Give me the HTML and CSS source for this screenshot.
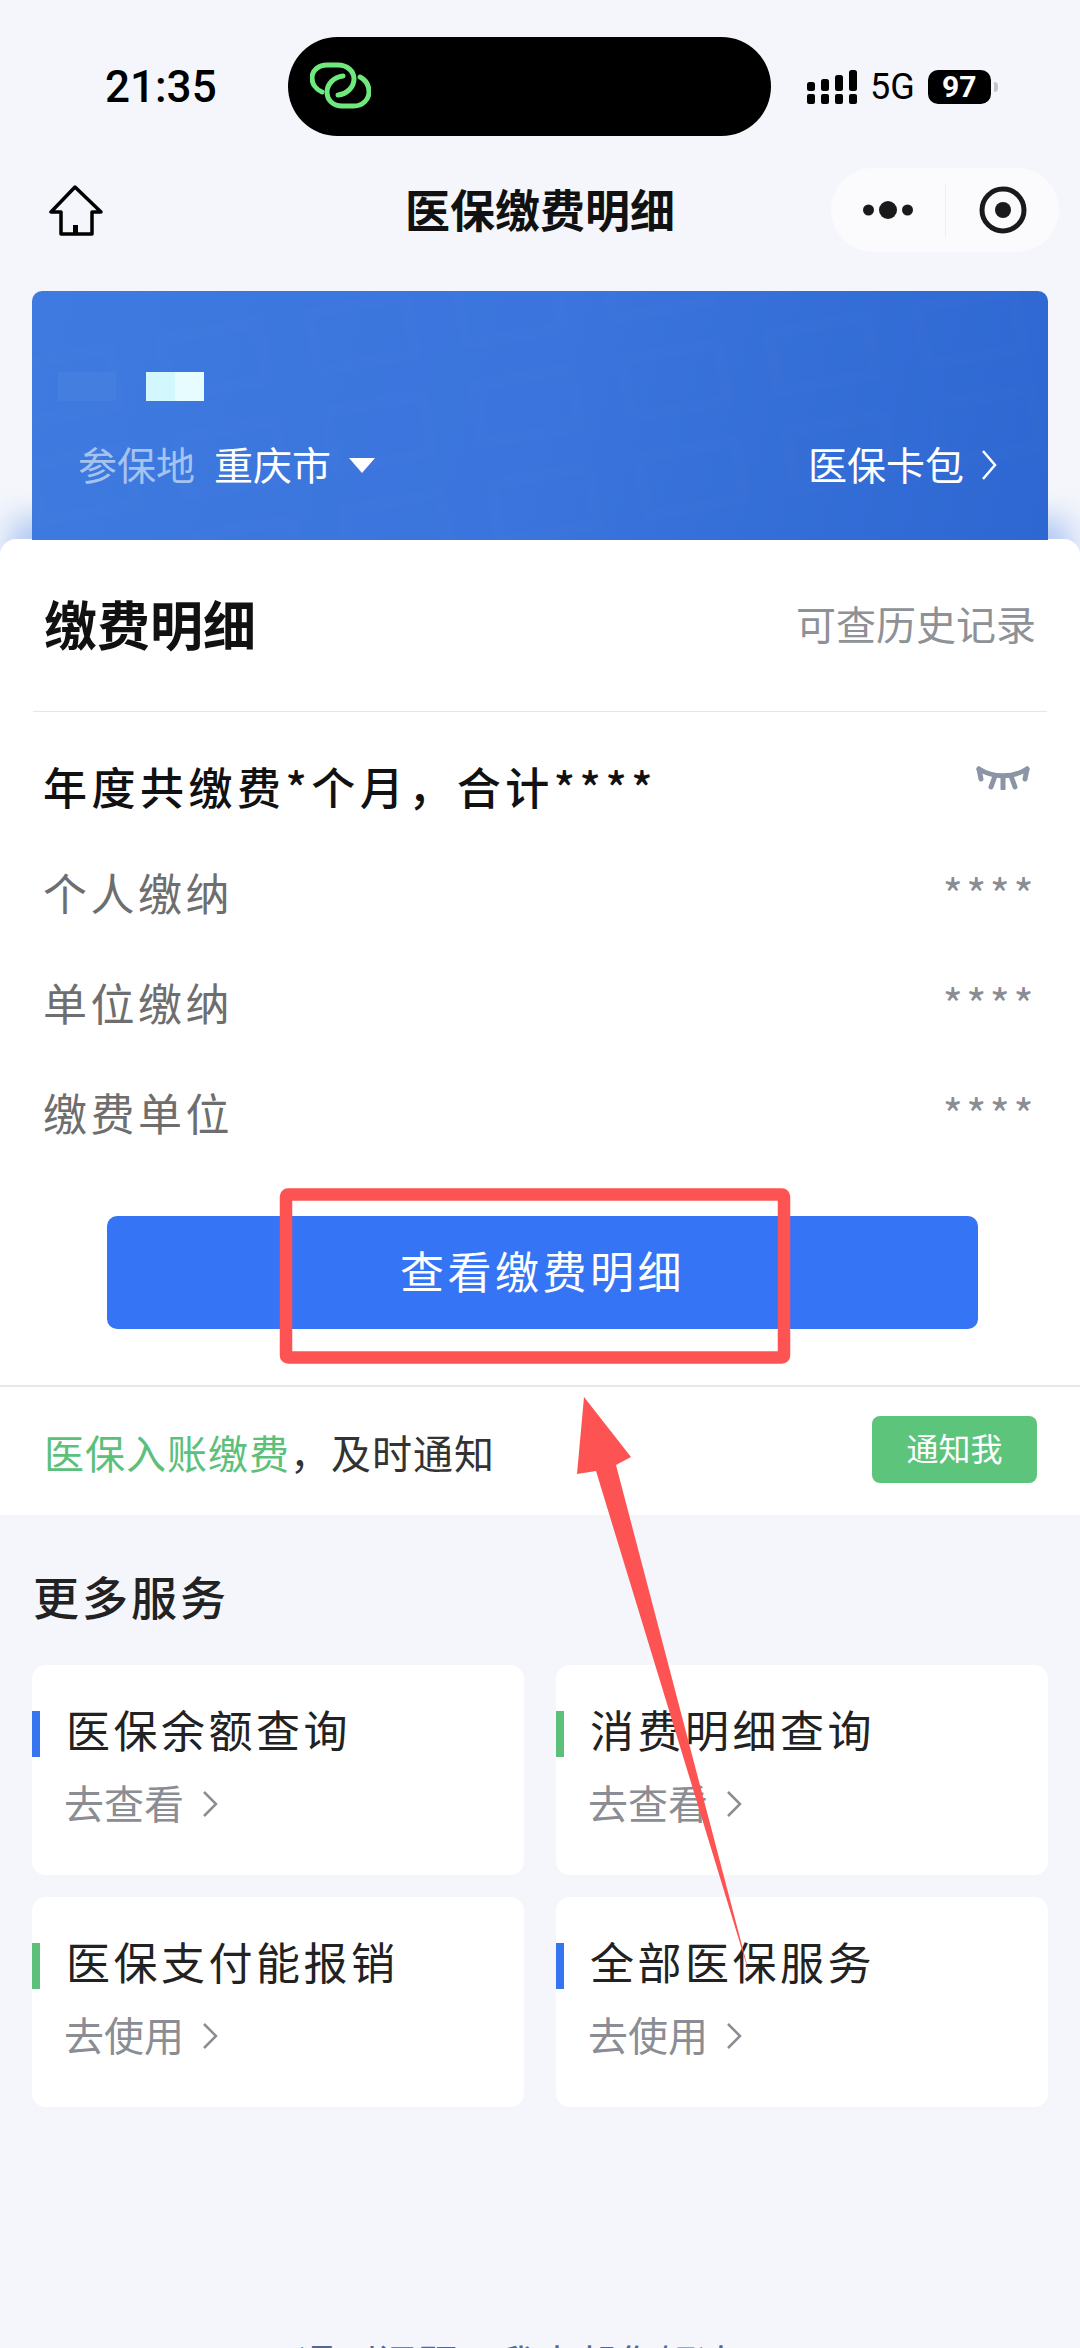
FILE: index.html
```html
<!DOCTYPE html>
<html lang="zh-CN">
<head>
    <meta charset="UTF-8">
    <meta name="viewport" content="width=device-width, initial-scale=1.0">
    <title>医保缴费明细</title>
    <link rel="stylesheet" href="styles.css">
</head>
<body>
<div class="page">
    <div class="status">
        <div class="time">21:35</div>
        <div class="island">
            <svg class="link-icon" width="61" height="47" viewBox="0 0 61 47" fill="none" stroke="#6fe87c" stroke-width="5" stroke-linecap="round">
                <path d="M12 30C5 27 2 21 2 16C2 8 9 3 17 3H28C37 3 44 9 44 17C44 25 37 32 28 33"/>
                <path d="M50 15C56 18 59 24 59 30C59 38 52 44 44 44H32C23 44 17 38 17 30C17 22 24 15 33 14"/>
            </svg>
        </div>
        <div class="status-right">
            <svg width="50" height="34" viewBox="0 0 50 34" fill="#000">
                <rect x="0" y="24" width="8" height="10" rx="2"/><rect x="14" y="24" width="8" height="10" rx="2"/>
                <rect x="28" y="24" width="8" height="10" rx="2"/><rect x="42" y="24" width="8" height="10" rx="2"/>
                <rect x="0" y="12" width="8" height="9" rx="2.5"/><rect x="14" y="9" width="8" height="12" rx="2.5"/>
                <rect x="28" y="5" width="8" height="16" rx="2.5"/><rect x="42" y="0" width="8" height="21" rx="2.5"/>
            </svg>
            <span class="net">5G</span>
            <span class="battery">97</span>
            <span class="battery-nub"></span>
        </div>
    </div>

    <div class="nav">
        <svg class="home" width="54" height="51" viewBox="0 0 54 51" fill="none" stroke="#000" stroke-width="3.5" stroke-linejoin="round">
            <path d="M26 2L2 27H12V49H43V27H52Z"/>
            <rect x="24" y="40" width="5" height="9" fill="#000" stroke="none"/>
        </svg>
        <div class="nav-title">医保缴费明细</div>
        <div class="capsule">
            <div class="capsule-left">
                <svg width="50" height="20" viewBox="0 0 50 20" fill="#1a1a1a">
                    <circle cx="5.5" cy="10" r="5.5"/><circle cx="25" cy="10" r="9"/><circle cx="44.5" cy="10" r="5.5"/>
                </svg>
            </div>
            <div class="capsule-right">
                <svg width="48" height="48" viewBox="0 0 48 48" fill="none">
                    <circle cx="24" cy="24" r="21" stroke="#1a1a1a" stroke-width="5"/>
                    <circle cx="24" cy="24" r="8" fill="#1a1a1a"/>
                </svg>
            </div>
        </div>
    </div>

    <div class="hero">
        <div class="watermark">
            <i></i><i></i><i></i><i></i><i></i><i></i><i></i>
            <i></i><i></i><i></i><i></i><i></i><i></i><i></i>
            <i></i><i></i><i></i><i></i><i></i><i></i><i></i>
        </div>
        <div class="masked-name">
            <span class="mask-a"></span>
            <span class="mask-b"></span>
            <span class="mask-c"></span>
        </div>
        <div class="hero-row">
            <div class="place">
                <span class="place-label">参保地</span>
                <span class="place-name">重庆市</span>
                <span class="caret"></span>
            </div>
            <div class="wallet">
                医保卡包
                <svg width="16" height="30" viewBox="0 0 16 30" fill="none" stroke="#fff" stroke-width="2.5">
                    <path d="M2 1L14 15L2 29"/>
                </svg>
            </div>
        </div>
    </div>

    <div class="sheet">
        <div class="sheet-head">
            <div class="sheet-title">缴费明细</div>
            <div class="sheet-hint">可查历史记录</div>
        </div>
        <div class="total">
            <div class="total-text">年度共缴费*个月，合计****</div>
            <svg class="eye" width="54" height="26" viewBox="0 0 54 26" fill="none" stroke="#8b95a6" stroke-width="5" stroke-linecap="round">
                <path d="M3 5C17 14 37 14 51 5"/>
                <path d="M5 15L3 5M15 23L19 12M27 25V13M39 23L35 12M49 15L51 5"/>
            </svg>
        </div>
        <div class="rows">
            <div class="row"><span>个人缴纳</span><span class="stars">****</span></div>
            <div class="row"><span>单位缴纳</span><span class="stars">****</span></div>
            <div class="row"><span>缴费单位</span><span class="stars">****</span></div>
        </div>
        <div class="main-btn">查看缴费明细</div>
        <div class="notify">
            <div class="notify-text"><span class="green">医保入账缴费</span>，及时通知</div>
            <div class="notify-btn">通知我</div>
        </div>
    </div>

    <div class="more-title">更多服务</div>
    <div class="cards">
        <div class="card">
            <div class="card-head"><span class="bar bar-blue"></span><span class="card-title">医保余额查询</span></div>
            <div class="card-link">去查看
                <svg width="16" height="26" viewBox="0 0 16 26" fill="none" stroke="#8a8d93" stroke-width="2.5"><path d="M2 1L14 13L2 25"/></svg>
            </div>
        </div>
        <div class="card">
            <div class="card-head"><span class="bar bar-green"></span><span class="card-title">消费明细查询</span></div>
            <div class="card-link">去查看
                <svg width="16" height="26" viewBox="0 0 16 26" fill="none" stroke="#8a8d93" stroke-width="2.5"><path d="M2 1L14 13L2 25"/></svg>
            </div>
        </div>
        <div class="card">
            <div class="card-head"><span class="bar bar-green"></span><span class="card-title">医保支付能报销</span></div>
            <div class="card-link">去使用
                <svg width="16" height="26" viewBox="0 0 16 26" fill="none" stroke="#8a8d93" stroke-width="2.5"><path d="M2 1L14 13L2 25"/></svg>
            </div>
        </div>
        <div class="card">
            <div class="card-head"><span class="bar bar-blue"></span><span class="card-title">全部医保服务</span></div>
            <div class="card-link">去使用
                <svg width="16" height="26" viewBox="0 0 16 26" fill="none" stroke="#8a8d93" stroke-width="2.5"><path d="M2 1L14 13L2 25"/></svg>
            </div>
        </div>
    </div>
    <div class="help">遇到问题？我来帮您解决</div>

    <!-- red markup drawn over the screenshot -->
    <svg class="markup" width="1080" height="2348" viewBox="0 0 1080 2348">
        <rect x="286" y="1194.5" width="498" height="163" rx="2" fill="none" stroke="#fd5353" stroke-width="12.5"/>
        <path d="M584 1397L631 1457L616 1465L750 1976L596 1471L577 1474Z" fill="#fd5353"/>
    </svg>
</div>
</body>
</html>
```

FILE: styles.css
```css
* {
    box-sizing: border-box;
}
body {
    margin: 0;
    background-color: #f4f6fb;
    font-family: "Noto Sans CJK SC", "Noto Sans", sans-serif;
}
.page {
    position: relative;
    width: 1080px;
    height: 2348px;
    overflow: hidden;
}

/* status bar */
.status {
    display: flex;
    align-items: center;
    height: 136px;
    padding-top: 37px;
}
.time {
    width: 288px;
    padding-left: 105px;
    font-family: Roboto, sans-serif;
    font-size: 44px;
    font-weight: 500;
    color: #000;
}
.island {
    display: flex;
    align-items: center;
    width: 483px;
    height: 99px;
    padding-left: 22px;
    background-color: #000;
    border-radius: 50px;
}
.link-icon {
    margin-top: -2px;
}
.status-right {
    display: flex;
    align-items: center;
    margin-left: 36px;
}
.net {
    margin-left: 13px;
    font-family: Roboto, sans-serif;
    font-size: 36px;
    color: #000;
}
.battery {
    width: 63px;
    height: 34px;
    margin-left: 13px;
    background-color: #000;
    border-radius: 10px;
    color: #fff;
    font-family: Roboto, sans-serif;
    font-size: 30px;
    font-weight: 700;
    line-height: 34px;
    text-align: center;
}
.battery-nub {
    width: 4px;
    height: 10px;
    margin-left: 3px;
    background-color: #c4c4c8;
    border-radius: 0 4px 4px 0;
}

/* nav */
.nav {
    display: grid;
    grid-template-columns: 1fr auto 1fr;
    align-items: center;
    height: 84px;
    margin-top: 32px;
    padding: 0 21px;
}
.home {
    margin-left: 28px;
}
.nav-title {
    padding-bottom: 3px;
    font-size: 45px;
    font-weight: 700;
    color: #111;
}
.capsule {
    display: flex;
    justify-self: end;
    align-items: center;
    width: 228px;
    height: 84px;
    background-color: #fbfbfd;
    border-radius: 42px;
}
.capsule-left {
    display: flex;
    justify-content: center;
    align-items: center;
    width: 115px;
    height: 54px;
    border-right: 1px solid #eeeef0;
}
.capsule-right {
    display: flex;
    justify-content: center;
    flex: 1;
}

/* blue card */
.hero {
    position: relative;
    z-index: 1;
    height: 249px;
    margin: 39px 32px 0;
    padding-top: 81px;
    background: linear-gradient(105deg, #3e7ae0, #3a74dc 50%, #2e67d1);
    border-radius: 10px 10px 0 0;
    overflow: hidden;
}
.watermark {
    position: absolute;
    top: -20px;
    left: -10px;
    display: grid;
    grid-template-columns: repeat(7, 110px);
    grid-auto-rows: 70px;
    gap: 30px 40px;
    transform: rotate(-10deg);
}
.watermark i {
    border: 12px solid rgba(255, 255, 255, 0.01);
    border-radius: 8px;
}
.masked-name {
    position: relative;
    display: flex;
    height: 29px;
    margin-left: 26px;
}
.mask-a {
    width: 58px;
    margin-right: 30px;
    background-color: #447edf;
}
.mask-b {
    width: 29px;
    background-color: #d2f7fd;
}
.mask-c {
    width: 29px;
    background-color: #e6fcff;
}
.hero-row {
    position: relative;
    display: flex;
    justify-content: space-between;
    align-items: center;
    height: 40px;
    margin-top: 42px;
    padding: 0 51px 0 46px;
    font-size: 39px;
    line-height: 40px;
}
.place {
    display: flex;
    align-items: center;
}
.place-label {
    color: #a6c3f0;
}
.place-name {
    margin-left: 19px;
    color: #fff;
}
.caret {
    width: 0;
    height: 0;
    margin: 4px 0 0 18px;
    border-left: 13px solid transparent;
    border-right: 13px solid transparent;
    border-top: 15px solid #fff;
}
.wallet {
    display: flex;
    align-items: center;
    gap: 17px;
    color: #fff;
}
.wallet svg {
    margin-top: 4px;
}

/* white sheet */
.sheet {
    height: 976px;
    margin-top: -1px;
    background-color: #fff;
    border-radius: 16px 16px 0 0;
    box-shadow: 0 -30px 30px -10px rgba(70, 130, 230, 0.4);
}
.sheet-head {
    display: flex;
    justify-content: space-between;
    align-items: center;
    height: 173px;
    margin: 0 33px;
    padding: 0 11px 5px;
    border-bottom: 1px solid #e6e6e8;
}
.sheet-title {
    font-size: 53px;
    font-weight: 700;
    color: #111;
}
.sheet-hint {
    font-size: 40px;
    color: #8e9196;
}
.total {
    display: flex;
    justify-content: space-between;
    align-items: flex-start;
    height: 60px;
    margin-top: 47px;
    padding: 0 50px 0 43px;
}
.total-text {
    font-size: 44px;
    font-weight: 500;
    line-height: 54px;
    letter-spacing: 4.5px;
    color: #111;
}
.eye {
    margin-top: 5px;
}
.rows {
    margin-top: 20px;
}
.row {
    display: flex;
    justify-content: space-between;
    align-items: center;
    height: 110px;
    padding: 0 43px 5px 43px;
    font-size: 44px;
    letter-spacing: 3.5px;
    color: #6e6e6e;
}
.stars {
    color: #8a8d93;
    font-size: 43px;
    letter-spacing: 3.5px;
}
.main-btn {
    height: 113px;
    margin: 47px 102px 0 107px;
    padding-bottom: 4px;
    background-color: #3575f5;
    border-radius: 10px;
    color: #fff;
    font-size: 44px;
    line-height: 109px;
    letter-spacing: 3.5px;
    text-align: center;
}
.notify {
    display: flex;
    justify-content: space-between;
    align-items: flex-start;
    height: 130px;
    margin-top: 56px;
    padding: 29px 43px 0 44px;
    border-top: 2px solid #e8e8ea;
}
.notify-text {
    margin-top: 16px;
    font-size: 40px;
    line-height: 40px;
    letter-spacing: 1px;
    color: #333;
}
.green {
    color: #5cc07a;
}
.notify-btn {
    width: 165px;
    height: 67px;
    background-color: #5dc47c;
    border-radius: 8px;
    color: #fff;
    font-size: 32px;
    line-height: 63px;
    text-align: center;
}

/* more services */
.more-title {
    margin: 50px 0 40px 33px;
    font-size: 46px;
    font-weight: 500;
    line-height: 60px;
    letter-spacing: 3px;
    color: #222;
}
.cards {
    display: grid;
    grid-template-columns: 492px 492px;
    grid-auto-rows: 210px;
    gap: 22px 32px;
    padding: 0 32px;
}
.card {
    padding-top: 46px;
    background-color: #fff;
    border-radius: 14px;
}
.card-head {
    display: flex;
    align-items: flex-start;
    gap: 26px;
}
.bar {
    width: 8px;
    height: 46px;
}
.bar-blue {
    background-color: #3575f0;
}
.bar-green {
    background-color: #5cc07a;
}
.card-title {
    margin-top: -3px;
    font-size: 44px;
    line-height: 42px;
    letter-spacing: 3.5px;
    color: #222;
}
.card-link {
    display: flex;
    align-items: center;
    gap: 18px;
    height: 40px;
    margin: 25px 0 0 32px;
    font-size: 40px;
    line-height: 40px;
    color: #8a8d93;
}
.card-link svg {
    margin-top: 4px;
}
.help {
    margin-top: 235px;
    padding-right: 46px;
    font-size: 40px;
    line-height: 40px;
    color: #56688a;
    text-align: center;
}
.markup {
    position: absolute;
    top: 0;
    left: 0;
    z-index: 2;
}
```
